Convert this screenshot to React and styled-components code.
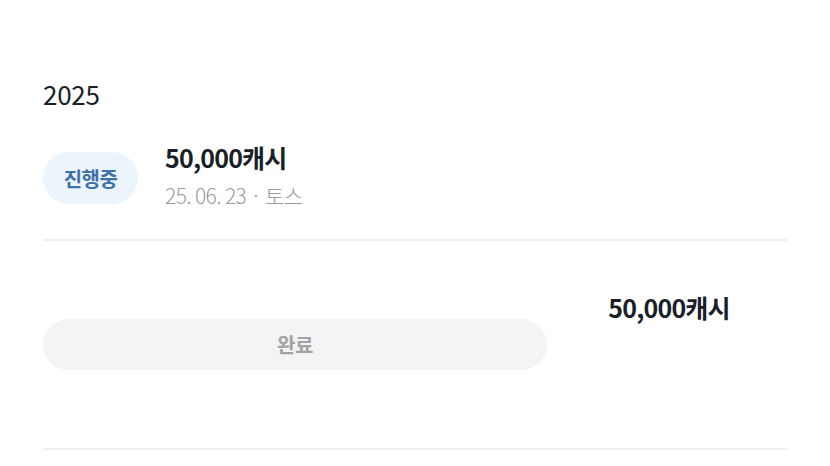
import React from "react";
import styled, { createGlobalStyle } from "styled-components";

const GlobalStyle = createGlobalStyle`
  html, body {
    margin: 0;
    padding: 0;
    background: #ffffff;
  }
  body {
    font-family: "Noto Sans CJK KR", "Noto Sans", sans-serif;
    color: #191f28;
  }
`;

const Page = styled.div`
  padding: 73px 43px 0;
`;

const Year = styled.h2`
  margin: 0;
  font-size: 26px;
  font-weight: 400;
  line-height: 41px;
  letter-spacing: -0.3px;
  color: #191f28;
`;

const Row = styled.div`
  display: flex;
  align-items: flex-start;
  gap: 27px;
  padding: 38px 0 31px;
  border-bottom: 2px solid #f0f0f0;
`;

const Badge = styled.span`
  display: inline-flex;
  align-items: center;
  justify-content: center;
  flex-shrink: 0;
  width: 95px;
  height: 52px;
  border-radius: 26px;
  background: #edf5fc;
  color: #4071ab;
  font-size: 20px;
  font-weight: 700;
  letter-spacing: -0.5px;
`;

const Info = styled.div`
  display: flex;
  flex-direction: column;
  gap: 9px;
  margin-top: -11px;
`;

const Amount = styled.div`
  font-size: 25px;
  font-weight: 700;
  line-height: 32px;
  letter-spacing: -0.8px;
  color: #191f28;
`;

const Meta = styled.div`
  font-size: 21px;
  font-weight: 300;
  line-height: 26px;
  letter-spacing: -0.6px;
  color: #9a9a9a;
`;

const ActionRow = styled.div`
  display: grid;
  grid-template-columns: 504px 1fr;
  align-items: center;
  height: 207px;
  border-bottom: 2px solid #f0f0f0;
`;

const DoneButton = styled.button`
  height: 51px;
  border: none;
  border-radius: 26px;
  background: #f4f4f4;
  color: #a3a3a3;
  font-family: inherit;
  font-size: 20px;
  font-weight: 700;
  letter-spacing: -0.5px;
`;

const SideAmount = styled(Amount)`
  align-self: start;
  margin-top: 50px;
  padding-left: 4px;
  text-align: center;
`;

export default function App() {
  return (
    <>
      <GlobalStyle />
      <Page>
        <Year>2025</Year>
        <Row>
          <Badge>진행중</Badge>
          <Info>
            <Amount>50,000캐시</Amount>
            <Meta>25. 06. 23 · 토스</Meta>
          </Info>
        </Row>
        <ActionRow>
          <DoneButton type="button">완료</DoneButton>
          <SideAmount>50,000캐시</SideAmount>
        </ActionRow>
      </Page>
    </>
  );
}
